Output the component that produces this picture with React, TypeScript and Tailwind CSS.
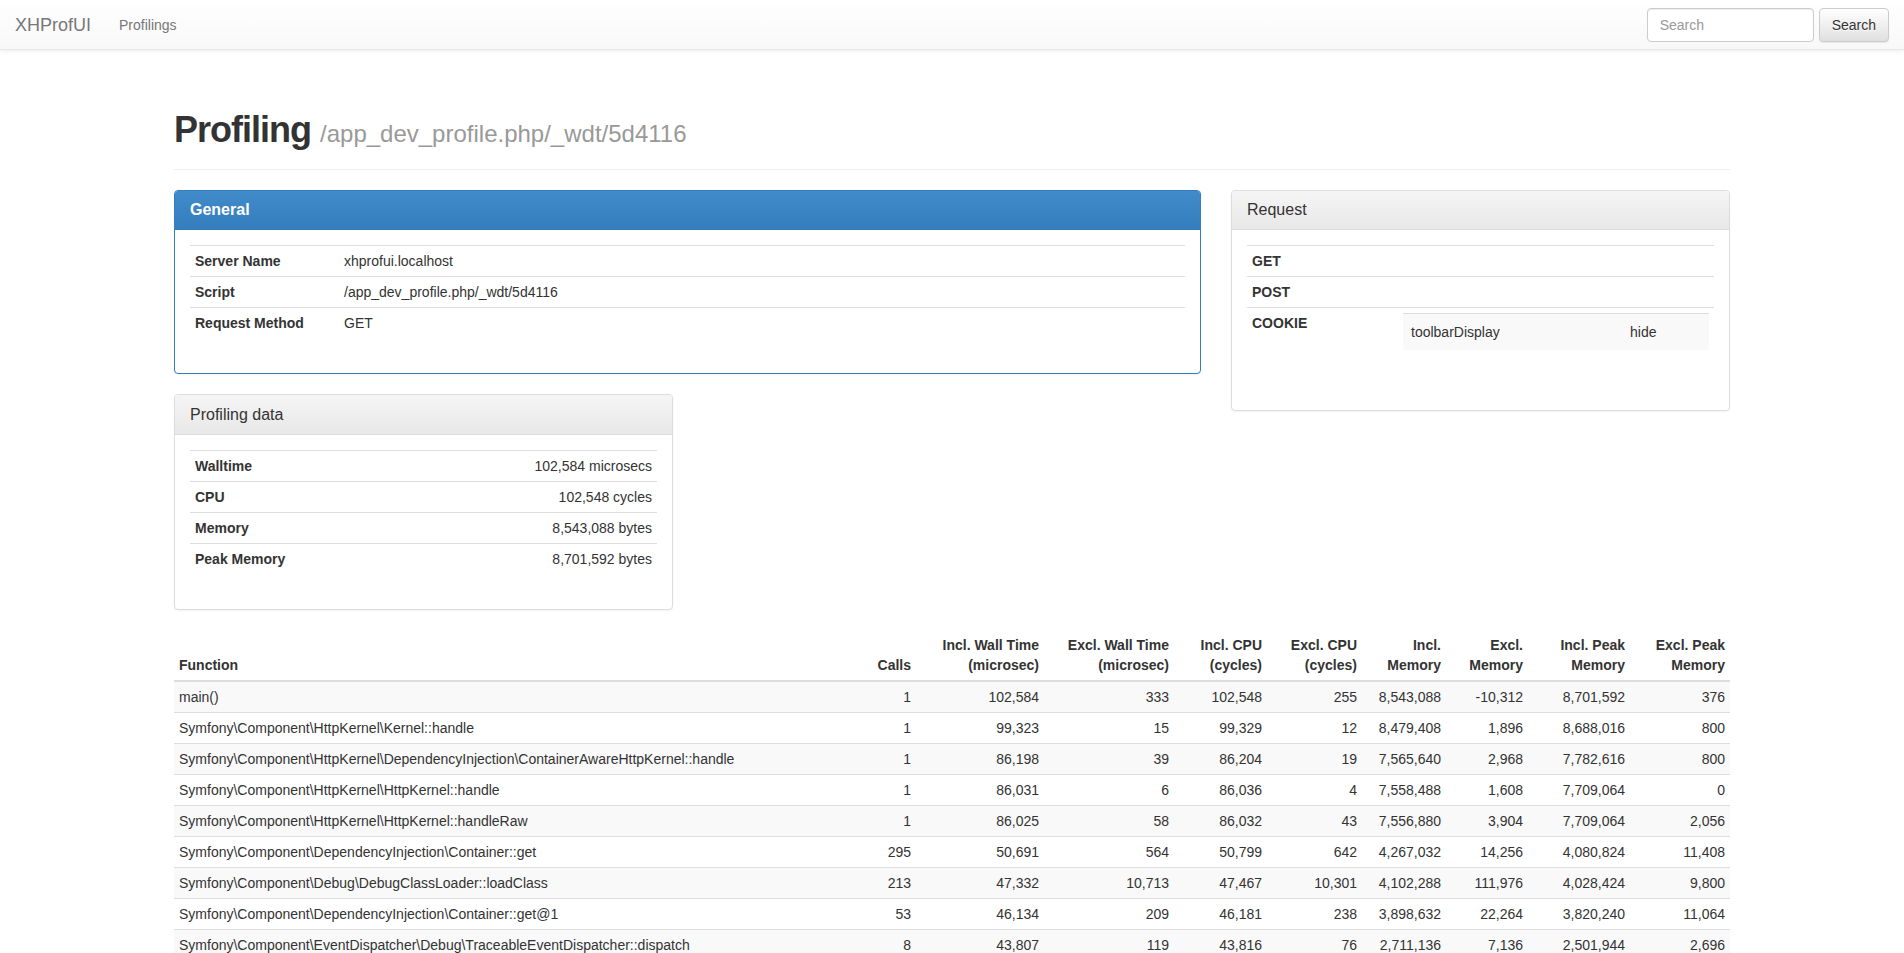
import React from "react";

type Row = [string, string, string, string, string, string, string, string, string, string];

const rows: Row[] = [
  ["main()", "1", "102,584", "333", "102,548", "255", "8,543,088", "-10,312", "8,701,592", "376"],
  ["Symfony\\Component\\HttpKernel\\Kernel::handle", "1", "99,323", "15", "99,329", "12", "8,479,408", "1,896", "8,688,016", "800"],
  ["Symfony\\Component\\HttpKernel\\DependencyInjection\\ContainerAwareHttpKernel::handle", "1", "86,198", "39", "86,204", "19", "7,565,640", "2,968", "7,782,616", "800"],
  ["Symfony\\Component\\HttpKernel\\HttpKernel::handle", "1", "86,031", "6", "86,036", "4", "7,558,488", "1,608", "7,709,064", "0"],
  ["Symfony\\Component\\HttpKernel\\HttpKernel::handleRaw", "1", "86,025", "58", "86,032", "43", "7,556,880", "3,904", "7,709,064", "2,056"],
  ["Symfony\\Component\\DependencyInjection\\Container::get", "295", "50,691", "564", "50,799", "642", "4,267,032", "14,256", "4,080,824", "11,408"],
  ["Symfony\\Component\\Debug\\DebugClassLoader::loadClass", "213", "47,332", "10,713", "47,467", "10,301", "4,102,288", "111,976", "4,028,424", "9,800"],
  ["Symfony\\Component\\DependencyInjection\\Container::get@1", "53", "46,134", "209", "46,181", "238", "3,898,632", "22,264", "3,820,240", "11,064"],
  ["Symfony\\Component\\EventDispatcher\\Debug\\TraceableEventDispatcher::dispatch", "8", "43,807", "119", "43,816", "76", "2,711,136", "7,136", "2,501,944", "2,696"],
];

function Panel({
  title,
  primary,
  children,
}: {
  title: string;
  primary?: boolean;
  children: React.ReactNode;
}) {
  return (
    <div
      className={
        primary
          ? "mb-5 rounded-[4px] border border-[#357ebd] bg-white shadow-[0_1px_2px_rgba(0,0,0,0.05)]"
          : "mb-5 rounded-[4px] border border-[#dddddd] bg-white shadow-[0_1px_2px_rgba(0,0,0,0.05)]"
      }
    >
      <div
        className={
          primary
            ? "rounded-t-[3px] border-b border-[#357ebd] bg-[linear-gradient(to_bottom,#428bca_0,#357ebd_100%)] px-[15px] py-[10.5px] text-white"
            : "rounded-t-[3px] border-b border-[#dddddd] bg-[linear-gradient(to_bottom,#f5f5f5_0,#e8e8e8_100%)] px-[15px] py-[10.5px] text-[#333]"
        }
      >
        <h3 className={primary ? "text-[16px] leading-[1.1] font-bold" : "text-[16px] leading-[1.1]"}>{title}</h3>
      </div>
      <div className="p-[15px]">{children}</div>
    </div>
  );
}

export default function App() {
  return (
    <div className="min-h-screen bg-white font-['Liberation_Sans',Arial,sans-serif] text-[14px] leading-[20px] text-[#333]">
      {/* Navbar */}
      <div className="flex h-[50px] items-center border-b border-[#e7e7e7] bg-[linear-gradient(to_bottom,#ffffff_0,#f8f8f8_100%)] shadow-[0_1px_5px_rgba(0,0,0,0.075)]">
        <div className="px-[15px] text-[18px] leading-5 text-[#777]">XHProfUI</div>
        <div className="px-[13px] text-[14px] leading-5 text-[#777]">Profilings</div>
        <div className="ml-auto flex items-center gap-[5px] pr-[15px]">
          <input
            placeholder="Search"
            className="h-[34px] w-[167px] rounded-[4px] border border-[#cccccc] bg-white px-[12px] py-[6px] text-[14px] text-[#555] shadow-[inset_0_1px_1px_rgba(0,0,0,0.075)] outline-none placeholder:text-[#999]"
          />
          <button className="h-[34px] rounded-[4px] border border-[#cccccc] bg-[linear-gradient(to_bottom,#ffffff_0,#e0e0e0_100%)] px-[12px] text-[14px] text-[#333] shadow-[0_1px_1px_rgba(0,0,0,0.075)] [text-shadow:0_1px_0_#fff]">
            Search
          </button>
        </div>
      </div>

      <div className="mx-auto w-[1556px]">
        {/* Page header */}
        <div className="mt-[60px] mb-5 border-b border-[#eeeeee] pb-[9px]">
          <h1 className="mb-[10px] text-[36px] leading-[1.1] font-bold tracking-[-1px] text-[#333]">
            Profiling{" "}
            <small className="text-[24px] font-normal tracking-normal text-[#999]">/app_dev_profile.php/_wdt/5d4116</small>
          </h1>
        </div>

        {/* Top panels */}
        <div className="flex gap-[30px]">
          <div className="w-[1027px]">
            <Panel title="General" primary>
              <table className="mb-5 w-full border-collapse">
                <tbody>
                  <tr className="border-t border-[#dddddd]">
                    <th className="w-[149px] p-[5px] text-left font-bold">Server Name</th>
                    <td className="p-[5px]">xhprofui.localhost</td>
                  </tr>
                  <tr className="border-t border-[#dddddd]">
                    <th className="p-[5px] text-left font-bold">Script</th>
                    <td className="p-[5px]">/app_dev_profile.php/_wdt/5d4116</td>
                  </tr>
                  <tr className="border-t border-[#dddddd]">
                    <th className="p-[5px] text-left font-bold">Request Method</th>
                    <td className="p-[5px]">GET</td>
                  </tr>
                </tbody>
              </table>
            </Panel>
            <div className="w-[499px]">
              <Panel title="Profiling data">
                <table className="mb-5 w-full border-collapse">
                  <tbody>
                    <tr className="border-t border-[#dddddd]">
                      <th className="p-[5px] text-left font-bold">Walltime</th>
                      <td className="p-[5px] text-right">102,584 microsecs</td>
                    </tr>
                    <tr className="border-t border-[#dddddd]">
                      <th className="p-[5px] text-left font-bold">CPU</th>
                      <td className="p-[5px] text-right">102,548 cycles</td>
                    </tr>
                    <tr className="border-t border-[#dddddd]">
                      <th className="p-[5px] text-left font-bold">Memory</th>
                      <td className="p-[5px] text-right">8,543,088 bytes</td>
                    </tr>
                    <tr className="border-t border-[#dddddd]">
                      <th className="p-[5px] text-left font-bold">Peak Memory</th>
                      <td className="p-[5px] text-right">8,701,592 bytes</td>
                    </tr>
                  </tbody>
                </table>
              </Panel>
            </div>
          </div>
          <div className="w-[499px]">
            <Panel title="Request">
              <table className="mb-5 w-full border-collapse">
                <tbody>
                  <tr className="border-t border-[#dddddd]">
                    <th className="w-[151px] p-[5px] text-left align-top font-bold">GET</th>
                    <td className="p-[5px]"></td>
                  </tr>
                  <tr className="border-t border-[#dddddd]">
                    <th className="p-[5px] text-left align-top font-bold">POST</th>
                    <td className="p-[5px]"></td>
                  </tr>
                  <tr className="border-t border-[#dddddd]">
                    <th className="p-[5px] text-left align-top font-bold">COOKIE</th>
                    <td className="p-[5px]">
                      <table className="mb-5 w-full border-collapse">
                        <tbody>
                          <tr className="border-t border-[#dddddd] bg-[#f9f9f9]">
                            <td className="w-[219px] p-[8px]">toolbarDisplay</td>
                            <td className="p-[8px]">hide</td>
                          </tr>
                        </tbody>
                      </table>
                    </td>
                  </tr>
                </tbody>
              </table>
            </Panel>
          </div>
        </div>

        {/* Main table */}
        <table className="mb-5 w-full table-fixed border-collapse">
          <colgroup>
            <col />
            <col className="w-[62px]" />
            <col className="w-[128px]" />
            <col className="w-[130px]" />
            <col className="w-[93px]" />
            <col className="w-[95px]" />
            <col className="w-[84px]" />
            <col className="w-[82px]" />
            <col className="w-[102px]" />
            <col className="w-[100px]" />
          </colgroup>
          <thead>
            <tr className="border-b-2 border-[#dddddd]">
              <th className="p-[5px] text-left align-bottom font-bold">Function</th>
              <th className="p-[5px] text-right align-bottom font-bold">Calls</th>
              <th className="p-[5px] text-right align-bottom font-bold">
                Incl. Wall Time
                <br />
                (microsec)
              </th>
              <th className="p-[5px] text-right align-bottom font-bold">
                Excl. Wall Time
                <br />
                (microsec)
              </th>
              <th className="p-[5px] text-right align-bottom font-bold">
                Incl. CPU
                <br />
                (cycles)
              </th>
              <th className="p-[5px] text-right align-bottom font-bold">
                Excl. CPU
                <br />
                (cycles)
              </th>
              <th className="p-[5px] text-right align-bottom font-bold">
                Incl.
                <br />
                Memory
              </th>
              <th className="p-[5px] text-right align-bottom font-bold">
                Excl.
                <br />
                Memory
              </th>
              <th className="p-[5px] text-right align-bottom font-bold">
                Incl. Peak
                <br />
                Memory
              </th>
              <th className="p-[5px] text-right align-bottom font-bold">
                Excl. Peak
                <br />
                Memory
              </th>
            </tr>
          </thead>
          <tbody>
            {rows.map((r, i) => (
              <tr key={i} className={i % 2 === 0 ? "border-t border-[#dddddd] bg-[#f9f9f9]" : "border-t border-[#dddddd]"}>
                <td className="truncate p-[5px] text-left">{r[0]}</td>
                {r.slice(1).map((v, j) => (
                  <td key={j} className="p-[5px] text-right">
                    {v}
                  </td>
                ))}
              </tr>
            ))}
          </tbody>
        </table>
      </div>
    </div>
  );
}
